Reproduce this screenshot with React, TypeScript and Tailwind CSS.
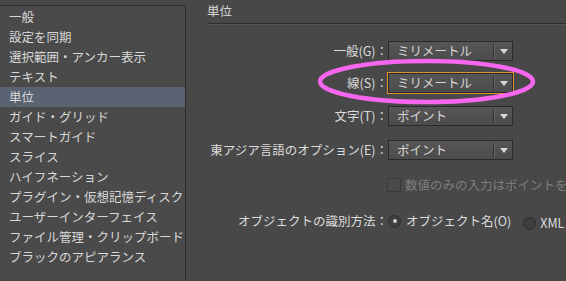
import React from 'react';

const font = { fontFamily: '"Noto Sans CJK JP", "Noto Sans", sans-serif' };

const categories = [
  '一般',
  '設定を同期',
  '選択範囲・アンカー表示',
  'テキスト',
  '単位',
  'ガイド・グリッド',
  'スマートガイド',
  'スライス',
  'ハイフネーション',
  'プラグイン・仮想記憶ディスク',
  'ユーザーインターフェイス',
  'ファイル管理・クリップボード',
  'ブラックのアピアランス',
];

function Dropdown({ value, focused }: { value: string; focused?: boolean }) {
  return (
    <div
      className={`flex h-[20px] w-[125px] items-center border border-[#2a2a2a] bg-gradient-to-b from-[#565656] to-[#4c4c4c] ${
        focused ? 'outline outline-1 outline-[#e0912f]' : ''
      }`}
    >
      <span className="flex-1 pl-[8px] text-[#d6d6d6] leading-none">{value}</span>
      <div className="h-[14px] w-px bg-[#2f2f2f]" />
      <div className="h-[14px] w-px bg-[#666666]" />
      <div className="flex w-[17px] items-center justify-center">
        <svg width="8" height="5" viewBox="0 0 8 5">
          <path d="M0 0 L8 0 L4 5 Z" fill="#d8d8d8" />
        </svg>
      </div>
    </div>
  );
}

function Row({ label, children, className }: { label: string; children: React.ReactNode; className: string }) {
  return (
    <div className={`flex items-center ${className}`}>
      <div className="w-[181px] text-right text-[#dcdcdc] whitespace-nowrap">{label}</div>
      {children}
    </div>
  );
}

export default function App() {
  return (
    <div className="relative flex h-[281px] w-[566px] overflow-hidden bg-[#484848] text-[12.5px]" style={font}>
      {/* category list */}
      <div className="mt-[5px] h-[300px] w-[186px] shrink-0 border-t border-r border-[#2b2b2b] bg-[#4a4a4a] pt-px">
        {categories.map((c) => (
          <div
            key={c}
            className={`flex h-[20px] items-center pl-[9px] whitespace-nowrap text-[#d8d8d8] ${
              c === '単位' ? 'bg-[#5a6371]' : ''
            }`}
          >
            {c}
          </div>
        ))}
      </div>

      {/* settings */}
      <div className="flex min-w-0 flex-1 flex-col pl-[21px]">
        <div className="flex h-[23px] items-center text-[#d8d8d8]">単位</div>
        <div className="h-px bg-[#2e2e2e]" />
        <div className="h-px bg-[#555555]" />

        <Row label="一般(G)：" className="mt-[16px]">
          <Dropdown value="ミリメートル" />
        </Row>
        <Row label="線(S)：" className="mt-[12px]">
          <Dropdown value="ミリメートル" focused />
        </Row>
        <Row label="文字(T)：" className="mt-[13px]">
          <Dropdown value="ポイント" />
        </Row>
        <Row label="東アジア言語のオプション(E)：" className="mt-[14px]">
          <Dropdown value="ポイント" />
        </Row>

        <div className="mt-[16px] flex items-center pl-[180px] whitespace-nowrap">
          <div className="h-[14px] w-[14px] shrink-0 border border-[#3a3a3a] bg-[#4a4a4a]" />
          <span className="ml-[4px] text-[#7d7d7d]">数値のみの入力はポイントを</span>
        </div>

        <div className="mt-[15px] flex items-center whitespace-nowrap">
          <div className="w-[181px] shrink-0 text-right text-[#dcdcdc]">オブジェクトの識別方法：</div>
          <div className="flex h-[13px] w-[13px] shrink-0 items-center justify-center rounded-full border border-[#2e2e2e] bg-[#3e3e3e]">
            <div className="h-[4px] w-[4px] rounded-full bg-[#d0d0d0]" />
          </div>
          <span className="ml-[5px] text-[#dcdcdc]">オブジェクト名(O)</span>
          <div className="ml-[12px] mt-[5px] h-[13px] w-[13px] shrink-0 rounded-full border border-[#2e2e2e] bg-[#3e3e3e]" />
          <span className="ml-[4px] mt-[4px] text-[#dcdcdc]">XML</span>
        </div>
      </div>

      {/* highlight annotation */}
      <svg className="pointer-events-none absolute left-[316px] top-[57px]" width="222" height="50" viewBox="0 0 222 50">
        <ellipse cx="110.5" cy="24.5" rx="106.5" ry="20.5" fill="none" stroke="#f766ee" strokeWidth="4.5" />
      </svg>
    </div>
  );
}
